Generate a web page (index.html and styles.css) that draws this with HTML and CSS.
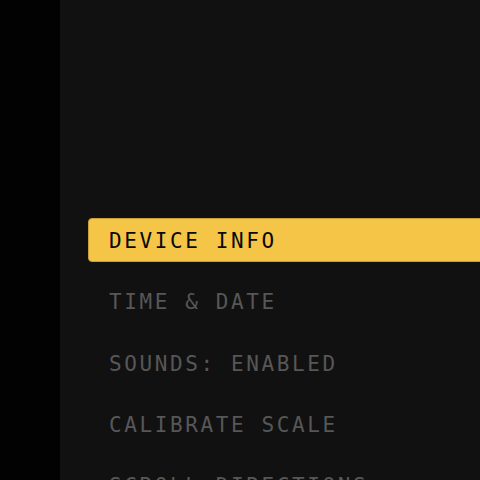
FILE: index.html
```html
<!DOCTYPE html>
<html>
<head>
<meta charset="utf-8">
<link rel="stylesheet" href="styles.css">
</head>
<body>
<div class="screen">
  <aside class="rail"></aside>
  <main class="panel">
    <ul class="menu">
      <li class="menu-item active">DEVICE INFO</li>
      <li class="menu-item">TIME &amp; DATE</li>
      <li class="menu-item">SOUNDS: ENABLED</li>
      <li class="menu-item">CALIBRATE SCALE</li>
      <li class="menu-item">SCROLL DIRECTIONS</li>
    </ul>
  </main>
</div>
</body>
</html>
```
FILE: styles.css
```css
html, body {
  margin: 0;
  padding: 0;
  width: 480px;
  height: 480px;
  overflow: hidden;
  background: #000;
}

.screen {
  display: flex;
  width: 480px;
  height: 480px;
}

.rail {
  width: 60px;
  flex: none;
  background: #020202;
}

.panel {
  flex: 1;
  background: #111111;
  overflow: hidden;
  padding-top: 218px;
}

.menu {
  list-style: none;
  margin: 0;
  padding: 0 0 0 28px;
  display: flex;
  flex-direction: column;
  gap: 17.3px;
}

.menu-item {
  height: 44px;
  display: flex;
  align-items: center;
  padding-left: 21px;
  padding-top: 2px;
  margin-right: -10px;
  font-family: "DejaVu Sans Mono", "Liberation Mono", monospace;
  font-size: 21px;
  letter-spacing: 2.6px;
  color: #575757;
  white-space: nowrap;
  box-sizing: border-box;
}

.menu-item.active {
  background: #f5c547;
  border: 1px solid #c99f35;
  border-radius: 4px;
  padding-left: 20px;
  padding-top: 1px;
  color: #0a0a0a;
}
```
